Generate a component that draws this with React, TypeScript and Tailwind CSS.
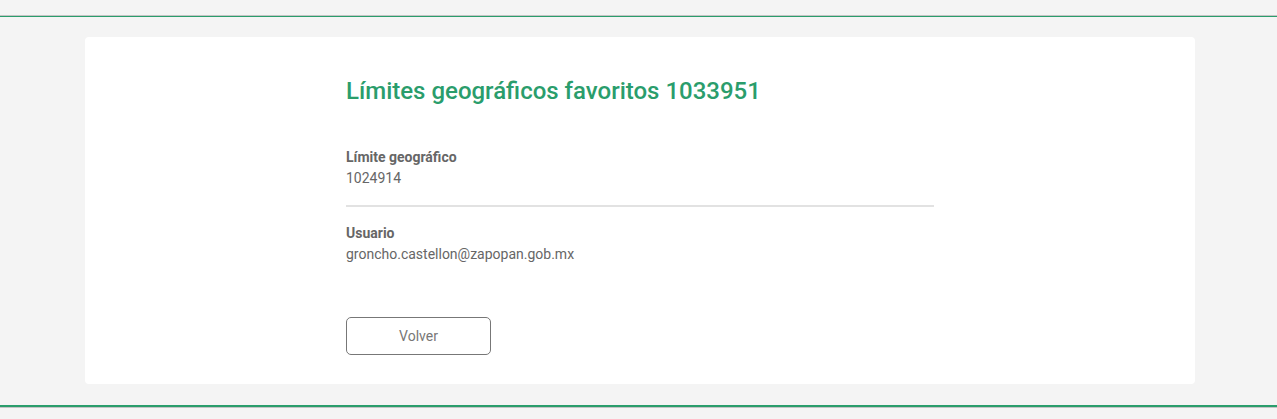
export default function App() {
  return (
    <div className="min-h-[419px] bg-[#f4f4f4] font-['Roboto',sans-serif] flex flex-col">
      <div className="h-[15px] shrink-0" />
      <div className="h-px shrink-0 bg-[#c4c4c4]" />
      <div className="h-px shrink-0 bg-[#2a9d6c]" />
      <main className="shrink-0 pt-[20px] pl-[85px] pr-[82px]">
        <div className="bg-white rounded-[4px] h-[347px] flex justify-center">
          <div className="w-[588px] pt-[38px]">
            <h1 className="text-[24px] leading-[32px] font-medium text-[#2a9d6c]">
              Límites geográficos favoritos 1033951
            </h1>
            <div className="mt-[40px] pb-[16px] border-b-2 border-[#e2e2e2]">
              <p className="text-[14px] leading-[21px] font-bold text-[#666]">Límite geográfico</p>
              <p className="text-[14px] leading-[21px] text-[#666]">1024914</p>
            </div>
            <div className="pt-[16px]">
              <p className="text-[14px] leading-[21px] font-bold text-[#666]">Usuario</p>
              <p className="text-[14px] leading-[21px] text-[#666]">groncho.castellon@zapopan.gob.mx</p>
            </div>
            <button className="mt-[52px] w-[145px] h-[38px] rounded-[5px] border border-[#777] text-[14px] text-[#777]">
              Volver
            </button>
          </div>
        </div>
      </main>
      <div className="h-[2px] shrink-0 bg-[#2a9d6c] mt-[21px]" />
      <div className="h-px shrink-0 bg-[#c4c4c4]" />
      <div className="h-[11px] shrink-0" />
    </div>
  )
}
